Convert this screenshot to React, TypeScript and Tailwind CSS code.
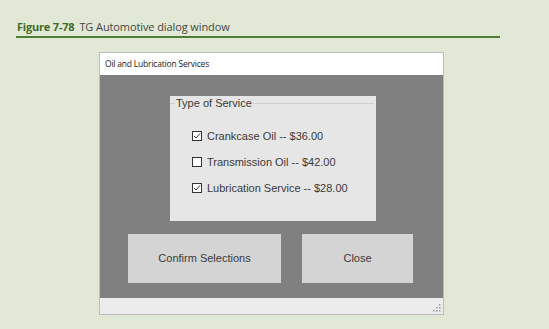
export default function App() {
  const items = [
    { label: "Crankcase Oil -- $36.00", checked: true },
    { label: "Transmission Oil -- $42.00", checked: false },
    { label: "Lubrication Service -- $28.00", checked: true },
  ];
  return (
    <div className="flex h-[329px] w-[549px] flex-col bg-[#e1e9d6] font-['Liberation_Sans',sans-serif]">
      <div className="ml-[17px] mt-[20px] flex items-baseline gap-[5px] font-['Open_Sans',sans-serif] text-[11px] leading-[14px]">
        <span className="font-bold tracking-[-0.2px] text-[#3f6b25]">Figure 7-78</span>
        <span className="tracking-[-0.1px] text-[#444]">TG Automotive dialog window</span>
      </div>
      <div className="ml-[16px] mt-[2px] h-[2px] w-[484px] bg-[#4f7d35]" />
      <div className="ml-[99px] mt-[14px] flex h-[263px] w-[345px] flex-col border border-[#bcbcbc] bg-white">
        <div className="flex h-[22px] items-center px-[5px] font-['Open_Sans',sans-serif] text-[8.5px] tracking-[-0.2px] text-[#222]">
          Oil and Lubrication Services
        </div>
        <div className="flex flex-1 flex-col bg-[#808080] pt-[21px]">
          <div className="ml-[70px] flex h-[125px] w-[206px] flex-col bg-[#e6e6e6] pt-[1px]">
            <div className="flex h-[12px] items-center text-[11px] leading-[12px] text-[#3a3a3a]">
              <div className="h-px w-[5px] bg-[#cfcfcf]" />
              <span className="px-[1px]">Type of Service</span>
              <div className="mr-[2px] h-px flex-1 bg-[#cfcfcf]" />
            </div>
            <div className="mt-[21px] flex flex-col gap-[14px] pl-[22px]">
              {items.map((it) => (
                <div key={it.label} className="flex h-[12px] items-center gap-[5px] text-[11px] text-[#3a3a3a]">
                  <span className="flex h-[10px] w-[10px] items-center justify-center border border-[#333] bg-white">
                    {it.checked && (
                      <svg width="8" height="8" viewBox="0 0 8 8">
                        <path d="M1 4 L3 6 L7 1.5" fill="none" stroke="#333" strokeWidth="1" />
                      </svg>
                    )}
                  </span>
                  <span>{it.label}</span>
                </div>
              ))}
            </div>
          </div>
          <div className="mt-[13px] flex gap-[21px] pl-[28px]">
            <div className="flex h-[49px] w-[153px] items-center justify-center bg-[#d4d4d4] text-[11px] text-[#3a3a3a]">
              Confirm Selections
            </div>
            <div className="flex h-[49px] w-[111px] items-center justify-center bg-[#d4d4d4] text-[11px] text-[#3a3a3a]">
              Close
            </div>
          </div>
        </div>
        <div className="flex h-[16px] items-end justify-end bg-[#ececec] pb-[2px] pr-[2px]">
          <svg width="8" height="8" viewBox="0 0 8 8">
            <rect x="6" y="0" width="1.5" height="1.5" fill="#999" />
            <rect x="3" y="3" width="1.5" height="1.5" fill="#999" />
            <rect x="6" y="3" width="1.5" height="1.5" fill="#999" />
            <rect x="0" y="6" width="1.5" height="1.5" fill="#999" />
            <rect x="3" y="6" width="1.5" height="1.5" fill="#999" />
            <rect x="6" y="6" width="1.5" height="1.5" fill="#999" />
          </svg>
        </div>
      </div>
    </div>
  );
}
